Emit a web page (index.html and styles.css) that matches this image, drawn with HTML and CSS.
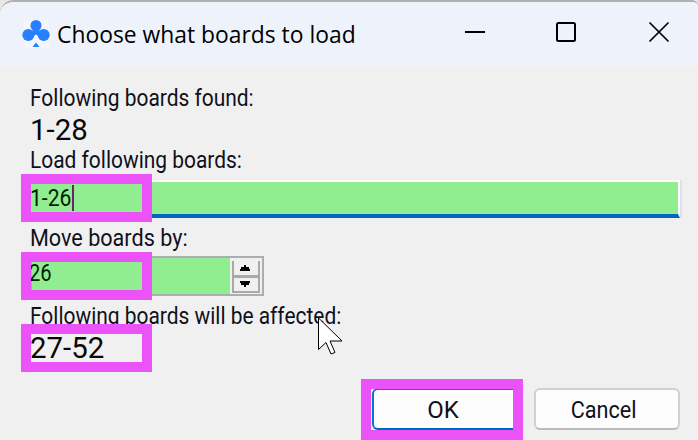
FILE: index.html
```html
<!DOCTYPE html>
<html lang="en">
<head>
<meta charset="utf-8">
<title>Choose what boards to load</title>
<link rel="stylesheet" href="styles.css">
</head>
<body>
<div class="window">
  <header class="titlebar">
    <svg class="club" width="30" height="34" viewBox="0 0 30 34"><rect x="3" y="3" width="25" height="28" rx="3" fill="#f3f7fc"/><g fill="#267fff"><circle cx="15" cy="8.500" r="5.500"/><circle cx="7.300" cy="18" r="6"/><circle cx="22.700" cy="18" r="6"/><path d="M12 11h6l1 5-1 3.500-3-2-3 2-1-3.500zM15 25.500l3.500 4.500h-7z"/></g></svg>
    <h1 class="caption">Choose what boards to load</h1>
    <svg class="controls" width="206" height="30" viewBox="0 0 206 30" fill="none" stroke="#000" stroke-width="2"><path d="M1 15h20"/><rect x="93" y="6" width="18" height="18" rx="1.500"/><path d="M185.500 5.500l19 19M204.500 5.500l-19 19" stroke-width="1.700"/></svg>
  </header>
  <main class="form">
    <label class="label found">Following boards found:</label>
    <div class="value">1-28</div>
    <label class="label found">Load following boards:</label>
    <div class="field"><div class="textbox"><span class="entry">1-26</span><i class="caret"></i></div></div>
    <label class="label move">Move boards by:</label>
    <div class="field">
      <div class="spinner"><div class="number"><span class="entry short">26</span></div>
        <svg width="28" height="34" viewBox="0 0 28 34" shape-rendering="crispEdges"><path fill="#f0f0f0" d="M0 0h28v34H0z"/><path d="M1 2v31h26V2" fill="none" stroke="#a9a9a9" stroke-width="2"/><path d="M1 17.500h26" stroke="#a9a9a9" stroke-width="3"/><path d="M12 6h2v2h3v2h1v2H8v-2h1V8h3zM8 22h10v2h-1v2h-3v2h-2v-2H9v-2H8z"/></svg>
      </div>
    </div>
    <label class="label affected">Following boards will be affected:</label>
    <div class="value">27-52</div>
  </main>
  <footer class="actions"><button class="button primary"><span class="ok">OK</span></button><button class="button"><span class="cancel">Cancel</span></button></footer>
  <i class="ring ring-load"></i><i class="ring ring-move"></i><i class="ring ring-affected"></i><i class="ring ring-ok"></i>
  <svg class="pointer" width="27" height="40" viewBox="0 0 27 40"><path d="M1.500 1v31.500l7.500-7 5 11.500 4-1.500-5-11.500H25z" fill="#fff" stroke="#000" stroke-width="1"/></svg>
</div>
</body>
</html>
```
FILE: styles.css
```css
* { box-sizing: border-box; }
body { margin: 0; background: #e8e8e8; }
.window {
  position: relative; width: 698px; height: 440px; overflow: hidden;
  display: flex; flex-direction: column; background: #f0f0f0;
  border-top: 2px solid #b0b0b0; border-radius: 14px 6px 0 0;
  color: #000; font-family: Roboto, "Liberation Sans", sans-serif;
}
.titlebar {
  height: 64px; flex: none; display: flex; align-items: center;
  padding-left: 21px; background: #eef3fb;
}
.club { flex: none; }
.caption { margin: 0 0 0 6px; font: 24px/32px "Open Sans", sans-serif; white-space: nowrap; transform: scaleX(.952); transform-origin: left; }
.controls { margin: 0 28px 4px auto; }
.form { display: flex; flex-direction: column; padding: 18px 16px 0 30px; height: 302px; flex: none; }
.label { height: 28px; font-size: 24px; line-height: 28px; flex: none; white-space: nowrap; color: #10101c; transform-origin: left; }
.value { height: 34px; font-size: 30px; line-height: 35px; flex: none; color: #080808; transform-origin: left; }
.label { align-self: flex-start; transform: scaleX(.872); }
.label.move { transform: scaleX(.9); }
.value { align-self: flex-start; transform: scaleX(.98); }
.field { height: 50px; flex: none; padding-top: 6px; }
.textbox {
  display: flex; align-items: center; height: 38px; background: #90ee90;
  border: solid #fff; border-width: 2px 2px 4px 0; border-bottom-color: #0067c0;
  box-shadow: 2px 0 #dce2ea; margin-right: 4px;
  margin-right: 2px;
}
.entry { font-size: 24px; line-height: 30px; transform: scaleX(.88); transform-origin: left; display: inline-block; color: #061c06; }
.entry.short { margin-left: -3px; transform: scaleX(.84); }
.caret { width: 2px; height: 26px; background: #70206f; margin-left: -5px; }
.spinner { width: 234px; height: 40px; margin-top: -2px; border: 2px solid #abadb3; display: flex; gap: 2px; align-items: center; }
.number { width: 198px; height: 36px; background: #90ee90; }
.actions { display: flex; justify-content: flex-end; gap: 14px; padding: 20px 18px 0 0; }
.button {
  width: 146px; height: 42px; padding: 2px 6px 0 0; background: #fdfdfd; border: 2px solid #d0d0d0;
  border-bottom-color: #bbb; border-radius: 6px; font: 24px/28px Roboto, sans-serif; color: #10101c;
}
.button.primary { width: 148px; border-color: #0078d4; border-bottom-color: #0067c0; }
.button span { display: inline-block; transform: scaleX(.9); }
.button .ok { transform: scaleX(1); }
.ring { position: absolute; left: 21px; width: 131px; height: 48px; border: 10px solid #eb52f7; }
.ring-load { top: 172px; }
.ring-move { top: 250px; }
.ring-affected { top: 322px; }
.ring-ok { left: 361px; top: 377px; width: 162px; height: 61px; }
.pointer { position: absolute; left: 317px; top: 315px; }
```
